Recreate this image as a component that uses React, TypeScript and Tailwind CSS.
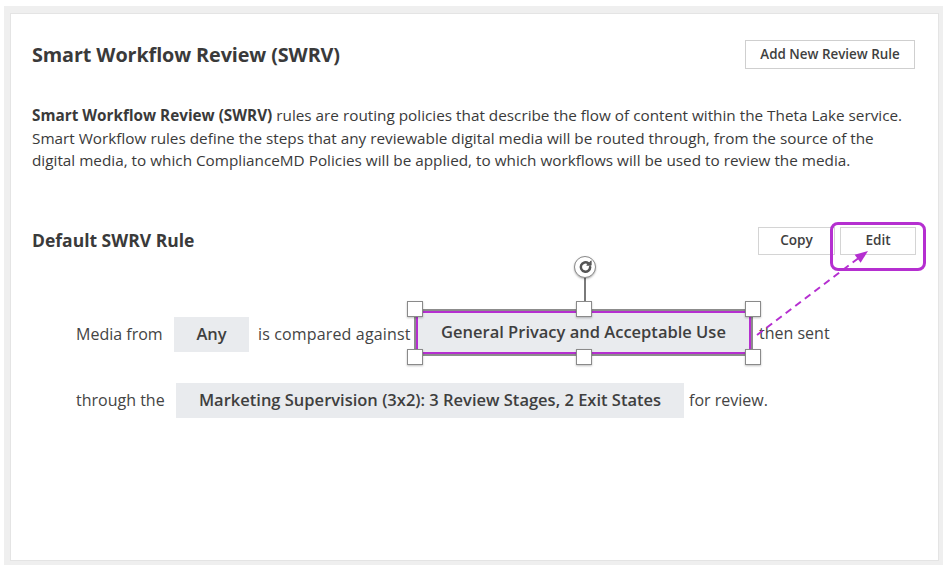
import React from "react";

const Handle = ({ className }: { className: string }) => (
  <div
    className={
      "absolute w-[16px] h-[16px] bg-white border border-[#8a8a8a] shadow-[0_1px_2px_rgba(0,0,0,0.25)] " +
      className
    }
  />
);

export default function App() {
  return (
    <div
      className="relative w-[948px] h-[572px] bg-white text-[#444]"
      style={{ fontFamily: '"Open Sans", "Liberation Sans", sans-serif' }}
    >
      <div className="ml-[4px] mt-[6px] w-[939px] h-[559px] bg-[#efefef] pl-[6px] pt-[7px] pr-[4px] pb-[4px]">
        <div className="w-full h-full bg-white border border-[#e4e4e4] pl-[21px] pr-[23px] pt-[26px]">
          {/* Header */}
          <div className="flex items-center justify-between h-[29px]">
            <h1 className="text-[19.8px] font-bold text-[#3a3a3a] tracking-[-0.1px]">
              Smart Workflow Review (SWRV)
            </h1>
            <button className="w-[170px] h-[29px] border border-[#cfcfcf] bg-white text-[13.4px] font-semibold text-[#3f3f3f]">
              Add New Review Rule
            </button>
          </div>

          {/* Description */}
          <p className="mt-[35px] text-[15.3px] leading-[22.5px] text-[#3a3a3a] whitespace-nowrap">
            <span className="font-bold">Smart Workflow Review (SWRV)</span> rules are routing policies that describe the
            flow of content within the Theta Lake service.
            <br />
            Smart Workflow rules define the steps that any reviewable digital media will be routed through, from the
            source of the
            <br />
            digital media, to which ComplianceMD Policies will be applied, to which workflows will be used to review the
            media.
          </p>

          {/* Rule header */}
          <div className="mt-[55px] flex items-center justify-between h-[28px]">
            <h2 className="text-[17.5px] font-bold text-[#3a3a3a]">Default SWRV Rule</h2>
            <div className="flex items-center gap-[5px] mr-[-1px]">
              <button className="w-[77px] h-[28px] border border-[#d4d4d4] bg-white text-[13.6px] font-semibold text-[#3f3f3f]">
                Copy
              </button>
              <button className="w-[76px] h-[28px] border border-[#d4d4d4] bg-white text-[13.6px] font-semibold text-[#3f3f3f]">
                Edit
              </button>
            </div>
          </div>

          {/* Rule sentence */}
          <div className="pl-[44px] text-[16px] text-[#444]">
            <div className="mt-[54px] flex items-center h-[47px]">
              <span className="w-[87px] mt-[4px] whitespace-nowrap">Media from</span>
              <span className="ml-[11px] w-[75px] h-[35px] mt-[4px] bg-[#e9ebee] flex items-center justify-center text-[16.5px] font-semibold text-[#3f3f3f]">
                Any
              </span>
              <span className="ml-[9px] w-[153px] mt-[4px] whitespace-nowrap tracking-[0.15px]">is compared against</span>
              <div className="relative ml-[3px]">
                <div className="border-2 border-[#8c8c8c]">
                  <div className="border-2 border-[#b52fd0]">
                    <div className="w-[331px] h-[39px] bg-[#e9ebee] flex items-center justify-center text-[16.5px] font-semibold text-[#3f3f3f] whitespace-nowrap">
                      General Privacy and Acceptable Use
                    </div>
                  </div>
                </div>
                {/* rotation handle */}
                <div className="absolute left-[170px] top-[-32px] w-[2px] h-[24px] bg-[#7a7a7a]" />
                <div className="absolute left-[160px] top-[-53px] w-[22px] h-[22px] rounded-full bg-white border-[1.5px] border-[#8a8a8a] shadow-[0_1px_2px_rgba(0,0,0,0.3)] flex items-center justify-center">
                  <svg width="15" height="15" viewBox="0 0 24 24" fill="none" stroke="#555" strokeWidth="4" strokeLinecap="round" strokeLinejoin="round">
                    <path d="M19.5 13a7.5 7.5 0 1 1-3-6.2" />
                    <path d="M21 3.5v6.5h-6.5z" fill="#555" strokeWidth="1.5" />
                  </svg>
                </div>
                <Handle className="left-[-7px] top-[-8px]" />
                <Handle className="left-[162px] top-[-8px]" />
                <Handle className="left-[331px] top-[-8px]" />
                <Handle className="left-[-7px] top-[40px]" />
                <Handle className="left-[162px] top-[40px]" />
                <Handle className="left-[331px] top-[40px]" />
              </div>
              <span className="ml-[6px] mt-[2px] whitespace-nowrap">then sent</span>
            </div>

            <div className="mt-[27px] flex items-center h-[35px]">
              <span className="w-[89px] whitespace-nowrap">through the</span>
              <span className="ml-[11px] w-[508px] h-[35px] bg-[#e9ebee] flex items-center justify-center text-[16.5px] font-semibold text-[#3f3f3f] whitespace-nowrap">
                Marketing Supervision (3x2): 3 Review Stages, 2 Exit States
              </span>
              <span className="ml-[5px] whitespace-nowrap">for review.</span>
            </div>
          </div>
        </div>
      </div>

      {/* Annotation: highlight box around Edit and dashed arrow */}
      <div className="absolute left-[830px] top-[216px] w-[96px] h-[49px] rounded-[8px] border-[3px] border-[#b52fd0] pointer-events-none" />
      <svg className="absolute left-0 top-0 pointer-events-none" width="948" height="572">
        <line x1="757" y1="329" x2="858" y2="252.5" stroke="#b52fd0" strokeWidth="2" strokeDasharray="7 5" />
        <polygon points="868,245 860.6,256.8 854.6,248.8" fill="#b52fd0" />
      </svg>
    </div>
  );
}
